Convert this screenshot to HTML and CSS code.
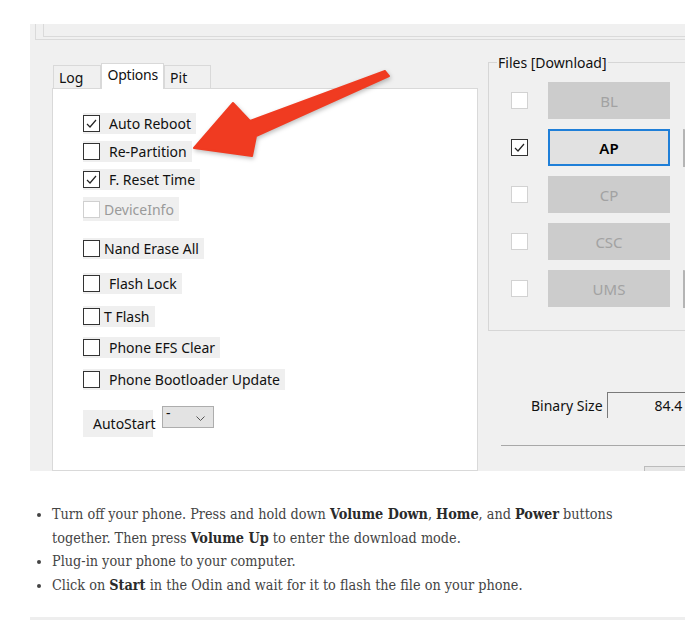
FILE: index.html
```html
<!DOCTYPE html>
<html lang="en">

<head>
    <meta charset="UTF-8">
    <meta name="viewport" content="width=device-width, initial-scale=1.0">
    <title>Flash firmware with Odin</title>
    <link rel="stylesheet" href="styles.css">
</head>

<body>

    <div class="page">

        <!-- Odin window capture -->
        <div class="shot">
            <div class="top-frame">
                <div class="top-inner"></div>
            </div>

            <div class="odin">
                <div class="left-col">
                    <div class="tabs">
                        <span class="tab">Log</span>
                        <span class="tab active">Options</span>
                        <span class="tab">Pit</span>
                    </div>
                    <div class="tab-panel">
                        <div class="opt">
                            <span class="box"><svg viewBox="0 0 15 15"><polyline points="3,8 6,11 12,4"/></svg></span>
                            <span class="label">Auto Reboot</span>
                        </div>
                        <div class="opt">
                            <span class="box"></span>
                            <span class="label">Re-Partition</span>
                        </div>
                        <div class="opt">
                            <span class="box"><svg viewBox="0 0 15 15"><polyline points="3,8 6,11 12,4"/></svg></span>
                            <span class="label">F. Reset Time</span>
                        </div>
                        <div class="opt disabled">
                            <span class="box"></span>
                            <span class="label tight">DeviceInfo</span>
                        </div>
                        <div class="opt gap-17">
                            <span class="box"></span>
                            <span class="label tight">Nand Erase All</span>
                        </div>
                        <div class="opt gap-14">
                            <span class="box"></span>
                            <span class="label">Flash Lock</span>
                        </div>
                        <div class="opt gap-12">
                            <span class="box"></span>
                            <span class="label tight">T Flash</span>
                        </div>
                        <div class="opt gap-10">
                            <span class="box"></span>
                            <span class="label">Phone EFS Clear</span>
                        </div>
                        <div class="opt gap-11">
                            <span class="box"></span>
                            <span class="label">Phone Bootloader Update</span>
                        </div>
                        <div class="autostart">
                            <span class="auto-label">AutoStart</span>
                            <span class="select">
                                <span class="select-value">-</span>
                                <svg class="chevron" viewBox="0 0 9 5"><polyline points="0.5,0.5 4.5,4.5 8.5,0.5"/></svg>
                            </span>
                        </div>
                    </div>
                </div>

                <div class="right-col">
                    <fieldset class="files">
                        <legend>Files [Download]</legend>
                        <div class="file-row">
                            <span class="box soft"></span>
                            <span class="file-btn">BL</span>
                        </div>
                        <div class="file-row">
                            <span class="box"><svg viewBox="0 0 15 15"><polyline points="3,8 6,11 12,4"/></svg></span>
                            <span class="file-btn on">AP</span>
                            <span class="file-field"></span>
                        </div>
                        <div class="file-row">
                            <span class="box soft"></span>
                            <span class="file-btn">CP</span>
                        </div>
                        <div class="file-row">
                            <span class="box soft"></span>
                            <span class="file-btn">CSC</span>
                        </div>
                        <div class="file-row">
                            <span class="box soft"></span>
                            <span class="file-btn">UMS</span>
                            <span class="file-field"></span>
                        </div>
                    </fieldset>

                    <div class="binary">
                        <span class="binary-label">Binary Size</span>
                        <span class="binary-box">84.4</span>
                    </div>
                    <hr class="sep">
                    <div class="start-btn"></div>
                </div>
            </div>

            <!-- red pointer drawn over the capture -->
            <svg class="arrow" viewBox="0 0 655 447">
                <polygon points="164,124 203,79 220,97 355,47 359,52 226,112 222,132"/>
            </svg>
        </div>

        <ul class="steps">
            <li>Turn off your phone. Press and hold down <b>Volume Down</b>, <b>Home</b>, and <b>Power</b> buttons together. Then press <b>Volume Up</b> to enter the download mode.</li>
            <li>Plug-in your phone to your computer.</li>
            <li>Click on <b>Start</b> in the Odin and wait for it to flash the file on your phone.</li>
        </ul>

        <div class="divider"></div>

    </div>

</body>

</html>
```

FILE: styles.css
```css
body {
    margin: 0;
    background-color: #fff;
    font-family: "Noto Sans", "Open Sans", sans-serif;
    color: #111;
}

.page {
    padding: 24px 11px 0 30px;
}

.shot {
    position: relative;
    width: 655px;
    height: 447px;
    background-color: #f0f0f0;
    overflow: hidden;
}

.top-frame {
    height: 15px;
    margin-left: 5px;
    padding-left: 7px;
    border-left: 1px solid #dadada;
    border-bottom: 1px solid #dadada;
}

.top-inner {
    height: 12px;
    border-left: 1px solid #dadada;
    border-bottom: 1px solid #dadada;
}

.odin {
    display: flex;
}

/* left: option tabs */
.left-col {
    width: 426px;
    margin-left: 22px;
    margin-top: 23px;
    flex-shrink: 0;
}

.tabs {
    display: flex;
    align-items: flex-end;
    height: 25px;
    padding-left: 1px;
}

.tab {
    height: 23px;
    padding: 0 17px 0 5px;
    border: 1px solid #d9d9d9;
    border-bottom: none;
    font-size: 14px;
    line-height: 23px;
    box-sizing: border-box;
}

.tab:last-child {
    padding-right: 23px;
}

.tab.active {
    height: 26px;
    padding: 0 5px;
    margin-bottom: -1px;
    background-color: #fff;
    line-height: 22px;
    letter-spacing: -0.2px;
    position: relative;
    z-index: 1;
}

.tab-panel {
    height: 383px;
    padding: 24px 0 0 30px;
    box-sizing: border-box;
    background-color: #fff;
    border: 1px solid #d9d9d9;
}

.opt {
    display: flex;
    align-items: center;
    width: max-content;
    height: 21px;
    margin-top: 7px;
    padding-right: 5px;
    background-color: #efefef;
    font-size: 14px;
}

.opt:first-child {
    margin-top: 0;
}

.opt.gap-10 {
    margin-top: 10px;
}

.opt.gap-11 {
    margin-top: 11px;
}

.opt.gap-12 {
    margin-top: 12px;
}

.opt.gap-14 {
    margin-top: 14px;
}

.opt.gap-17 {
    margin-top: 17px;
}

.box {
    display: block;
    width: 15px;
    height: 15px;
    border: 1px solid #333;
    background-color: #fff;
    flex-shrink: 0;
}

.box svg {
    display: block;
    width: 15px;
    height: 15px;
    fill: none;
    stroke: #222;
    stroke-width: 1.2;
}

.box.soft {
    border-color: #d2d2d2;
}

.label {
    margin-left: 9px;
}

.label.tight {
    margin-left: 4px;
}

.opt.disabled {
    color: #9a9a9a;
    height: 24px;
}

.opt.disabled .box {
    border-color: #d0d0d0;
}

.autostart {
    display: flex;
    align-items: flex-start;
    margin-top: 16px;
    font-size: 14px;
}

.auto-label {
    width: 60px;
    height: 27px;
    margin-top: 4px;
    padding-left: 10px;
    background-color: #efefef;
    line-height: 27px;
}

.select {
    display: flex;
    justify-content: space-between;
    width: 52px;
    height: 22px;
    margin-left: 9px;
    padding: 0 8px 0 3px;
    box-sizing: border-box;
    background-color: #e3e3e3;
    border: 1px solid #adadad;
}

.select-value {
    line-height: 12px;
}

.chevron {
    width: 9px;
    height: 5px;
    margin-top: 9px;
    fill: none;
    stroke: #555;
    stroke-width: 1;
}

/* right: files group */
.right-col {
    width: 260px;
    margin-left: 10px;
    margin-top: 13px;
    flex-shrink: 0;
}

.files {
    margin: 0;
    padding: 0 0 23px 0;
    border: 1px solid #d6d6d6;
}

.files legend {
    margin-left: 8px;
    padding: 0 1px;
    font-size: 14px;
    line-height: 19px;
}

.file-row {
    display: flex;
    align-items: center;
    height: 37px;
    margin-top: 10px;
    padding-left: 22px;
}

.file-btn {
    display: flex;
    align-items: center;
    justify-content: center;
    width: 122px;
    height: 37px;
    margin-left: 20px;
    box-sizing: border-box;
    background-color: #cccccc;
    color: #a2a2a2;
    font-size: 15px;
}

.file-btn.on {
    background-color: #e1e1e1;
    border: 2px solid #1f7fd8;
    color: #000;
    font-weight: 600;
}

.file-field {
    width: 40px;
    height: 37px;
    margin-left: 13px;
    border-left: 2px solid #b4b4b4;
    border-top: 1px solid #c8c8c8;
}

.binary {
    display: flex;
    align-items: center;
    margin-top: 61px;
    padding-left: 43px;
    font-size: 14px;
    white-space: nowrap;
}

.binary-label {
    flex-shrink: 0;
}

.binary-box {
    width: 120px;
    height: 26px;
    margin-left: 4px;
    padding-left: 47px;
    flex-shrink: 0;
    box-sizing: border-box;
    border-top: 1px solid #7a7a7a;
    border-left: 1px solid #7a7a7a;
    line-height: 25px;
}

.sep {
    margin: 27px 0 0 13px;
    border: 0;
    border-top: 1px solid #a8a8a8;
}

.start-btn {
    width: 80px;
    height: 10px;
    margin: 20px 0 0 156px;
    border-top: 1px solid #bcbcbc;
    border-left: 1px solid #bcbcbc;
    background-color: #e6e6e6;
}

.arrow {
    position: absolute;
    top: 0;
    left: 0;
    width: 655px;
    height: 447px;
    fill: #f03b21;
    stroke: #f03b21;
    stroke-width: 2;
    stroke-linejoin: round;
    filter: drop-shadow(1px 2px 2px rgba(0, 0, 0, 0.25));
}

/* instructions */
.steps {
    width: 610px;
    margin: 32px 0 0 0;
    padding-left: 22px;
    font-family: "DejaVu Serif Condensed", "DejaVu Serif", serif;
    font-stretch: condensed;
    font-size: 14.3px;
    line-height: 23.5px;
    color: #444;
}

.steps b {
    color: #2a2a2a;
}

.divider {
    width: 655px;
    height: 3px;
    margin-top: 20px;
    background-color: #eeeeee;
}
```
